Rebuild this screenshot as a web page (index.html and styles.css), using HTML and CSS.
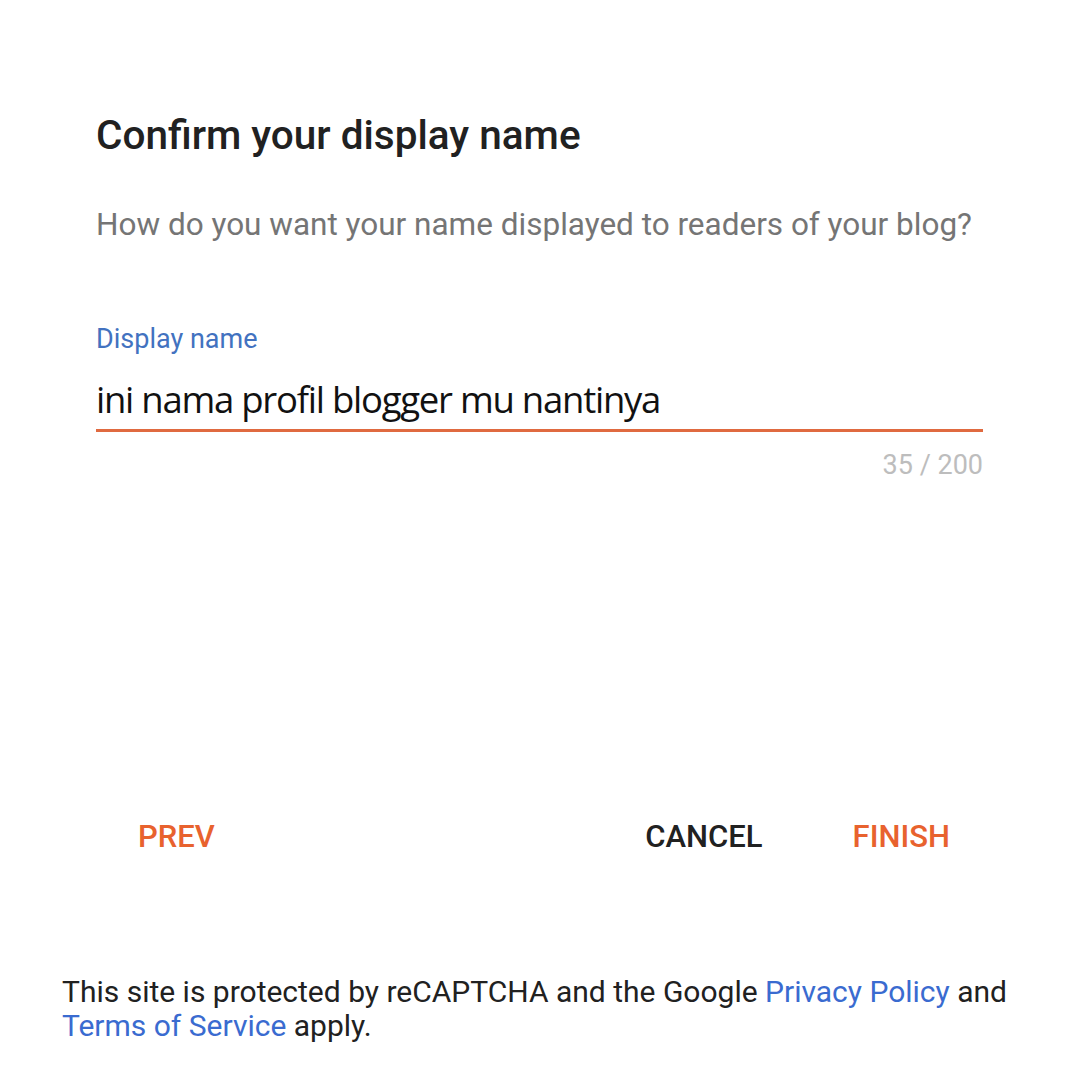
FILE: index.html
```html
<!DOCTYPE html>
<html>
<head>
<meta charset="utf-8">
<link rel="stylesheet" href="styles.css">
</head>
<body>
<div class="page">
  <div class="dialog">
    <h1 class="title">Confirm your display name</h1>
    <p class="subtitle">How do you want your name displayed to readers of your blog?</p>
    <div class="field">
      <label class="label">Display name</label>
      <div class="input">ini nama profil blogger mu nantinya</div>
      <div class="counter">35 / 200</div>
    </div>
    <div class="actions">
      <span class="btn accent">PREV</span>
      <span class="spacer"></span>
      <span class="btn dark">CANCEL</span>
      <span class="btn accent">FINISH</span>
    </div>
  </div>
  <p class="footer">This site is protected by reCAPTCHA and the Google <a class="link">Privacy Policy</a> and <a class="link">Terms of Service</a> apply.</p>
</div>
</body>
</html>
```
FILE: styles.css
```css
html, body {
  margin: 0;
  padding: 0;
  background: #ffffff;
}
body {
  font-family: Roboto, "Liberation Sans", sans-serif;
  color: #212121;
}
.page {
  width: 1078px;
  height: 1079px;
}
.dialog {
  padding: 111px 95px 0 96px;
}
.title {
  margin: 0;
  font-size: 40.5px;
  font-weight: 500;
  line-height: 48px;
  color: #212121;
}
.subtitle {
  margin: 48px 0 0;
  font-size: 31.5px;
  line-height: 36px;
  color: #757575;
}
.field {
  margin-top: 80px;
}
.label {
  display: block;
  font-size: 27px;
  line-height: 32px;
  color: #4272c0;
}
.input {
  margin-top: 22px;
  font-family: "Open Sans", "Noto Sans", sans-serif;
  font-size: 36.5px;
  letter-spacing: -1.25px;
  line-height: 44px;
  color: #111;
  padding-bottom: 8px;
  border-bottom: 3px solid #e06a40;
}
.counter {
  text-align: right;
  margin-top: 18px;
  font-size: 27px;
  line-height: 30px;
  color: #bdbdbd;
}
.actions {
  display: flex;
  align-items: center;
  margin-top: 339px;
  padding-left: 42px;
  padding-right: 33px;
}
.spacer { flex: 1; }
.btn {
  font-size: 31px;
  font-weight: 500;
  line-height: 36px;
}
.btn.dark { color: #212121; margin-right: 90px; }
.btn.accent { color: #e8622e; }
.footer {
  margin: 120px 0 0 62px;
  width: 960px;
  font-size: 30px;
  line-height: 34px;
  color: #212121;
}
.link { color: #3a6bd0; }
```
